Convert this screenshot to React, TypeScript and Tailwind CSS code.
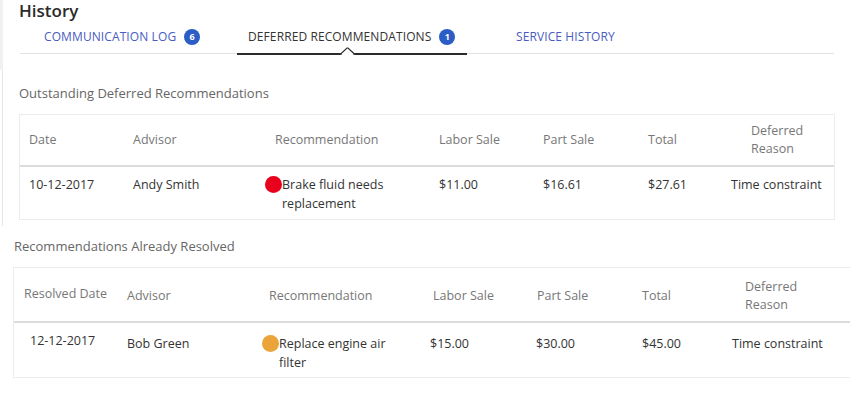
import React from 'react';

interface Row {
  date: string;
  advisor: string;
  recommendation: string;
  dot: string;
  labor: string;
  part: string;
  total: string;
  reason: string;
}

const font = { fontFamily: '"Open Sans", "Noto Sans", Arial, sans-serif' };

function Badge({ n }: { n: number }) {
  return (
    <span className="ml-[8px] inline-flex h-[16px] w-[16px] items-center justify-center rounded-full bg-[#2c5cc5] text-[9px] font-bold text-white">
      {n}
    </span>
  );
}

function Tabs() {
  return (
    <div className="relative ml-[17px] mr-[16px] mt-[7px] flex h-[27px] items-center border-b border-[#e2e2e2] pb-[6px] text-[12px] tracking-[0.1px]">
      <div className="flex w-[217px] items-center pl-[24px] text-[#4a5cbf]">
        COMMUNICATION LOG
        <Badge n={6} />
      </div>
      <div className="relative -mb-[7px] flex h-[28px] w-[230px] items-center border-b-[2px] border-[#2b2b2b] pb-[6px] pl-[11px] text-[#333]">
        DEFERRED RECOMMENDATIONS
        <Badge n={1} />
        <svg className="absolute left-[103px] bottom-[-2px]" width="16" height="8" viewBox="0 0 16 8">
          <path d="M0 7.5 L7 1 L8 1 L15 7.5" fill="white" stroke="#2b2b2b" strokeWidth="1.2" />
          <rect x="2" y="7" width="11" height="2" fill="white" />
        </svg>
      </div>
      <div className="pl-[49px] text-[#4a5cbf]">SERVICE HISTORY</div>
    </div>
  );
}

function Table({
  first,
  rows,
  variant,
}: {
  first: string;
  rows: Row[];
  variant: 'a' | 'b';
}) {
  const a = variant === 'a';
  return (
    <div
      className={
        a
          ? 'ml-[16px] w-[816px] border border-[#ececec]'
          : 'ml-[13px] w-[837px] border border-[#ececec] border-r-0'
      }
    >
      <div
        className={
          'grid grid-cols-[104px_142px_164px_104px_105px_83px_1fr] items-center border-b-[2px] border-[#dcdcdc] text-[12.5px] leading-[18px] text-[#777] ' +
          (a ? 'h-[52px]' : 'h-[55px] pt-[2px]')
        }
      >
        <div className={a ? 'pl-[9px]' : 'pl-[10px] pb-[4px]'}>{first}</div>
        <div className="pl-[9px]">Advisor</div>
        <div className="pl-[9px]">Recommendation</div>
        <div className="pl-[9px]">Labor Sale</div>
        <div className="pl-[9px]">Part Sale</div>
        <div className="pl-[9px]">Total</div>
        <div className="pl-[29px]">
          Deferred
          <br />
          Reason
        </div>
      </div>
      {rows.map((r) => (
        <div
          key={r.date}
          className={
            'grid grid-cols-[104px_142px_164px_104px_105px_83px_1fr] items-start text-[12.5px] leading-[19px] text-[#333] ' +
            (a ? 'h-[52px] pt-[8px]' : 'h-[54px] pt-[11px]')
          }
        >
          <div className={a ? 'pl-[9px]' : 'pl-[16px] -mt-[3px]'}>{r.date}</div>
          <div className="pl-[9px]">{r.advisor}</div>
          <div className={'flex items-start ' + (a ? '-ml-[1px]' : 'pl-[2px]')}>
            <span
              className="mt-[1px] h-[17px] w-[17px] shrink-0 rounded-full"
              style={{ backgroundColor: r.dot }}
            />
            <span className="w-[120px]">{r.recommendation}</span>
          </div>
          <div className={a ? 'pl-[9px]' : 'pl-[6px]'}>{r.labor}</div>
          <div className={a ? 'pl-[9px]' : 'pl-[8px]'}>{r.part}</div>
          <div className="pl-[9px]">{r.total}</div>
          <div className={a ? 'pl-[9px]' : 'pl-[16px]'}>{r.reason}</div>
        </div>
      ))}
    </div>
  );
}

export default function App() {
  const outstanding: Row[] = [
    {
      date: '10-12-2017',
      advisor: 'Andy Smith',
      recommendation: 'Brake fluid needs replacement',
      dot: '#e8001c',
      labor: '$11.00',
      part: '$16.61',
      total: '$27.61',
      reason: 'Time constraint',
    },
  ];
  const resolved: Row[] = [
    {
      date: '12-12-2017',
      advisor: 'Bob Green',
      recommendation: 'Replace engine air filter',
      dot: '#eba43a',
      labor: '$15.00',
      part: '$30.00',
      total: '$45.00',
      reason: 'Time constraint',
    },
  ];

  return (
    <div className="h-[402px] w-[850px] overflow-hidden bg-white" style={font}>
      <div className="h-[70px] border-l-[3px] border-[#f1f1f1]">
        <h1 className="pl-[16px] pt-[1px] text-[17px] font-semibold leading-[19px] text-[#2a2a2a]">
          History
        </h1>
        <Tabs />
      </div>

      <div className="ml-[2px] border-l border-[#e6e6e6] pt-[15px] pb-[6px]">
        <div className="-mt-[1px] ml-[16px] text-[13px] leading-[18px] text-[#666]">
          Outstanding Deferred Recommendations
        </div>
        <div className="h-[12px]" />
        <Table first="Date" rows={outstanding} variant="a" />
      </div>

      <div className="pt-[11px]">
        <div className="ml-[14px] text-[13px] leading-[18px] text-[#666]">
          Recommendations Already Resolved
        </div>
        <div className="h-[12px]" />
        <Table first="Resolved Date" rows={resolved} variant="b" />
      </div>
    </div>
  );
}
